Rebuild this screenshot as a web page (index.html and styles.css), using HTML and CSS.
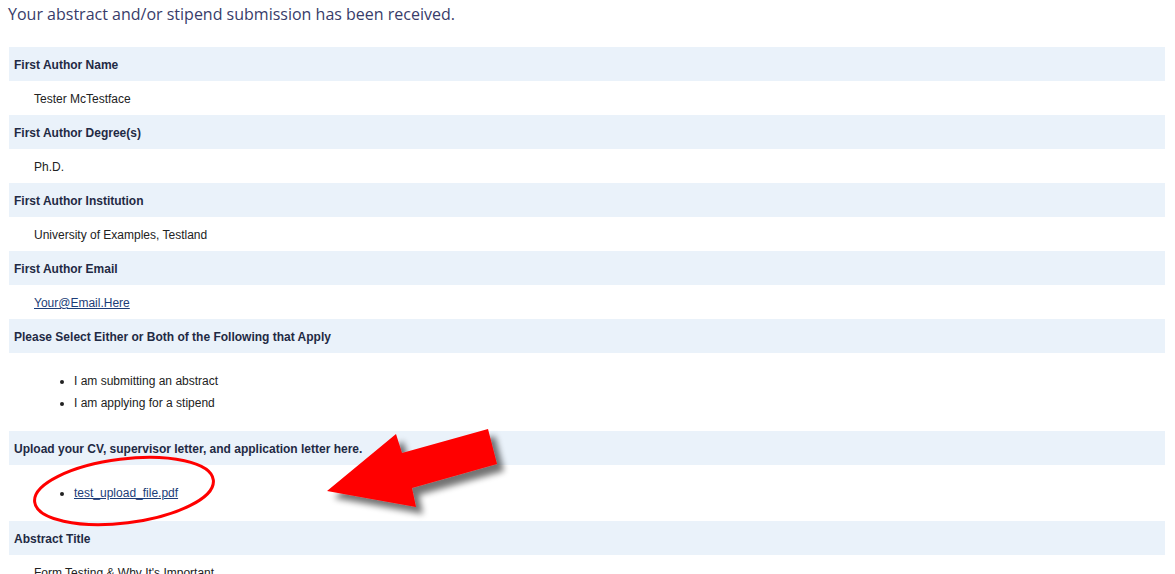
FILE: index.html
```html
<!DOCTYPE html>
<html>
<head>
<meta charset="utf-8">
<link rel="stylesheet" href="styles.css">
</head>
<body>
<div class="page">
  <h1 class="title">Your abstract and/or stipend submission has been received.</h1>
  <div class="entries">
    <div class="label">First Author Name</div>
    <div class="value">Tester McTestface</div>
    <div class="label">First Author Degree(s)</div>
    <div class="value">Ph.D.</div>
    <div class="label">First Author Institution</div>
    <div class="value">University of Examples, Testland</div>
    <div class="label">First Author Email</div>
    <div class="value"><a href="#">Your@Email.Here</a></div>
    <div class="label">Please Select Either or Both of the Following that Apply</div>
    <div class="value list">
      <ul>
        <li>I am submitting an abstract</li>
        <li>I am applying for a stipend</li>
      </ul>
    </div>
    <div class="label">Upload your CV, supervisor letter, and application letter here.</div>
    <div class="value list">
      <ul>
        <li><a href="#">test_upload_file.pdf</a></li>
      </ul>
    </div>
    <div class="label">Abstract Title</div>
    <div class="value">Form Testing &amp; Why It's Important</div>
  </div>
  <svg class="annot" width="1175" height="574" viewBox="0 0 1175 574" xmlns="http://www.w3.org/2000/svg">
    <defs>
      <filter id="sh" x="-20%" y="-20%" width="140%" height="140%">
        <feGaussianBlur in="SourceAlpha" stdDeviation="3"/>
        <feOffset dx="7" dy="7" result="b"/>
        <feComponentTransfer><feFuncA type="linear" slope="0.55"/></feComponentTransfer>
        <feMerge><feMergeNode/><feMergeNode in="SourceGraphic"/></feMerge>
      </filter>
    </defs>
    <polygon filter="url(#sh)" fill="#ff0000" points="327,491 396,434 402,453 488,429 497,464 412,488 416,507"/>
    <ellipse cx="124" cy="491" rx="90" ry="32" fill="none" stroke="#ff0000" stroke-width="3" transform="rotate(-7 124 491)"/>
  </svg>
</div>
</body>
</html>
```
FILE: styles.css
```css
html, body {
  margin: 0;
  padding: 0;
  background: #ffffff;
}
.page {
  position: relative;
  width: 1175px;
  height: 574px;
  overflow: hidden;
}
.title {
  margin: 0;
  padding: 3px 0 0 8px;
  height: 47px;
  box-sizing: border-box;
  font-family: "Open Sans", sans-serif;
  font-weight: 400;
  font-size: 16px;
  line-height: 22px;
  color: #383c6a;
}
.entries {
  margin: 0 10px 0 9px;
  font-family: "Liberation Sans", Arial, sans-serif;
  font-size: 12px;
}
.label {
  background: #eaf2fa;
  height: 34px;
  box-sizing: border-box;
  padding-top: 2px;
  line-height: 32px;
  padding-left: 5px;
  font-weight: bold;
  color: #1f2a44;
}
.value {
  height: 34px;
  box-sizing: border-box;
  padding-top: 2px;
  line-height: 32px;
  padding-left: 25px;
  color: #222222;
}
.value a {
  color: #1c3d78;
  text-decoration: underline;
}
.value.list {
  height: auto;
  padding-top: 0;
  padding-left: 25px;
}
.value.list ul {
  margin: 17px 0 17px 0;
  padding-left: 40px;
  list-style: disc;
}
.value.list li {
  line-height: 22px;
}
.annot {
  position: absolute;
  left: 0;
  top: 0;
  pointer-events: none;
}
```
